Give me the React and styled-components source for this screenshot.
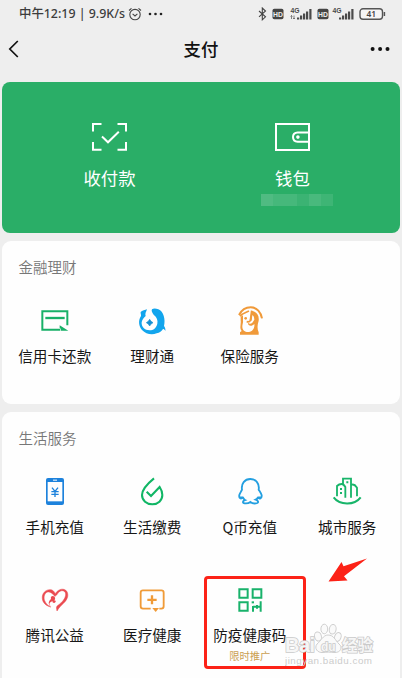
import React from 'react';
import styled, { createGlobalStyle } from 'styled-components';

const GlobalStyle = createGlobalStyle`
  * { box-sizing: border-box; }
  body {
    margin: 0;
    background: #eeeeee;
    font-family: 'Noto Sans CJK SC', 'Noto Sans', sans-serif;
    overflow: hidden;
  }
  svg { display: block; }
`

const Page = styled.div`
  position: relative;
  width: 402px;
  height: 678px;
  overflow: hidden;
  display: flex;
  flex-direction: column;
  background: #eeeeee;
`

const StatusBar = styled.div`
  height: 27px;
  padding: 0 16px 0 19px;
  display: flex;
  justify-content: space-between;
  align-items: center;
  color: #3c3c3c;
  flex: none;
`

const StatusText = styled.div`
  display: flex;
  align-items: center;
  font-family: 'Noto Sans', 'Noto Sans CJK SC', sans-serif;
  font-size: 12.4px;
  font-weight: 500;
  line-height: 18px;
  white-space: nowrap;
  svg { margin-left: 3px; }
`

const StatusIcons = styled.div`
  display: flex;
  align-items: center;
`

const NavBar = styled.div`
  height: 55px;
  padding: 0 12px 11px 8px;
  display: grid;
  grid-template-columns: 64px 1fr 60px;
  align-items: center;
  flex: none;
  > :last-child { justify-self: end; }
`

const Title = styled.h1`
  margin: 0;
  text-align: center;
  font-size: 17.4px;
  font-weight: 500;
  line-height: 24px;
  color: #111;
`

const Cards = styled.div`
  display: flex;
  flex-direction: column;
  gap: 8px;
  padding: 0 2px;
`

const PayCard = styled.div`
  height: 151px;
  border-radius: 8px;
  background: #2aae67;
  display: grid;
  grid-template-columns: 1fr 1fr;
  padding: 38px 16px 0;
  color: white;
`

const PayEntry = styled.div`
  display: flex;
  flex-direction: column;
  align-items: center;
`

const PayLabel = styled.div`
  margin-top: 13px;
  font-size: 17.4px;
  line-height: 26px;
`

const Mosaic = styled.div`
  display: grid;
  grid-template-columns: repeat(6, 12px);
  height: 12px;
  margin: 3px 0 0 9px;
`

const Block = styled.div`
  background: ${p => p.$color};
`

const Section = styled.div`
  height: ${p => p.$height}px;
  border-radius: 9px;
  background: #fefefe;
  padding: 15px 4px 0;
`

const SectionTitle = styled.div`
  padding-left: 12.5px;
  font-size: 14.5px;
  line-height: 22px;
  font-weight: 350;
  color: #777;
`

const Grid = styled.div`
  display: grid;
  grid-template-columns: repeat(4, 97.5px);
  grid-auto-rows: 107.5px;
  margin-top: 28px;
`

const Item = styled.div`
  position: relative;
  display: flex;
  flex-direction: column;
  align-items: center;
`

const Label = styled.div`
  margin-top: 9px;
  font-size: 14.6px;
  line-height: 22px;
  color: #171717;
  white-space: nowrap;
`

const Promo = styled.div`
  margin-top: 2px;
  font-size: 10.3px;
  line-height: 16px;
  color: #cba052;
`

const Highlight = styled.div`
  position: absolute;
  left: 3px;
  top: -9px;
  width: 102px;
  height: 93px;
  border: 3px solid #fc2217;
  border-radius: 4px;
`

const Arrow = styled.svg`
  position: absolute;
  left: 328px;
  top: 557px;
`

const Watermark = styled.div`
  position: absolute;
  left: 285px;
  top: 622px;
  width: 90px;
  height: 48px;
`

const WatermarkSvg = styled.svg`
  font-family: 'Liberation Sans', 'Noto Sans CJK SC', sans-serif;
`

const Signal = ({ data }) => (
  <svg width="23" height="14" viewBox="0 0 23 14" fill="#4a4a4a">
    <text x=".5" y="6" fontSize="6.8" fontWeight="700" fontFamily="Liberation Sans, sans-serif">4G</text>
    {data && <path d="M1.5 12V8.5M.5 9.5l1-1 1 1M4 8.5V12M3 11l1 1 1-1" stroke="#555" strokeWidth=".7" fill="none" />}
    <rect x="7" y="10.5" width="2.2" height="2" />
    <rect x="10" y="8.5" width="2.2" height="4" />
    <rect x="13" y="6.5" width="2.2" height="6" />
    <rect x="16" y="4.5" width="2.2" height="8" />
    <rect x="19.3" y="2" width="2.2" height="10.5" />
  </svg>
)

const Hd = () => (
  <svg width="12" height="12" viewBox="0 0 12 12">
    <rect x=".5" y=".8" width="11" height="10.4" rx="1.8" fill="#444" />
    <text x="6" y="8.6" fontSize="6.8" fontWeight="700" textAnchor="middle" fill="#eee" fontFamily="Liberation Sans, sans-serif">HD</text>
  </svg>
)

const Gap = styled.span`
  width: ${p => p.$w}px;
`

const Icon = ({ color, children }) => (
  <svg width="30" height="30" viewBox="0 0 90 90" fill="none" stroke={color} strokeWidth="6.2">
    {children}
  </svg>
)

const CreditIcon = () => (
  <Icon color="#18b068">
    <path d="M60 71.5H7V15.5H82V58" strokeWidth="6" />
    <path d="M16 36H74" strokeWidth="7" />
    <path d="M59 58L85 74H62V68L59 66Z" fill="#18b068" stroke="none" />
  </Icon>
)

const FundIcon = () => (
  <Icon color="none">
    <path d="M30 10C25 13 15 13 11 18C10 23 13 25 12 30C3 43 5 61 15 72C26 84 44 88 59 82C68 80 74 75 78 69C80 69 83 71 85 75C86 69 84 64 81 60C86 42 80 16 64 10C56 7 49 7 45 10C42 15 46 20 50 26C60 33 63 43 61 53C58 66 49 73 38 73C23 73 13 63 14 49C15 41 21 34 26 30C23 23 28 17 30 10Z" fill="#12a5ed" />
    <path d="M38 40Q41 47 48 50Q41 53 38 60Q35 53 28 50Q35 47 38 40Z" fill="#168fd2" stroke="#168fd2" strokeWidth="2" />
  </Icon>
)

const InsuranceIcon = () => (
  <Icon color="#f09a3a">
    <path d="M12 27C22 8 36 4 47 4C66 4 78 19 81 37" strokeWidth="6" />
    <path d="M15 31C22 21 32 20 42 15" strokeWidth="5" />
    <path d="M50 14C66 18 73 28 71 44C67 56 66 68 71 79V86H15V79L20 75C12 64 19 54 17 44V32L24 28V44C25 50 22 56 22 62C22 78 40 82 51 74C57 69 59 61 58 54C50 63 37 60 39 50C42 54 48 54 52 50L58 41C58 32 54 28 52 28L50 44L44 43Z" fill="#f09a3a" stroke="none" />
    <circle cx="32" cy="37" r="4" fill="#f09a3a" stroke="none" />
    <path d="M50 14L46 44Q43 49 35 47" strokeWidth="5" />
  </Icon>
)

const PhoneIcon = () => (
  <Icon color="#1d82dc">
    <rect x="18" y="3" width="54" height="81" rx="6" fill="#1d82dc" stroke="none" />
    <rect x="23" y="15" width="44" height="58" fill="#fefefe" stroke="none" />
    <path d="M39 9.5H51" stroke="#fff" strokeWidth="3" />
    <path d="M36 32L45 43L54 32M45 42V60M34 44H56M34 52H56" strokeWidth="4" />
  </Icon>
)

const BillIcon = () => (
  <Icon color="#10b665">
    <path d="M51 4C35 17 15 35 15 54C15 70 29 82 46 82C63 82 76 70 76 54C76 44 72 36 68 30L42 57L29 44" />
  </Icon>
)

const QqIcon = () => (
  <Icon color="#239fe0">
    <path d="M24 60C18 68 11 64 13 54C15 48 19 43 21 38C18 20 29 6 46 6C63 6 74 20 71 38C74 43 78 48 80 55C81 65 73 68 68 60M12 61H24M68 61H80M23 60C25 64 26 67 30 69C23 71 21 78 29 79C37 80 42 78 46 75C51 79 61 80 67 78C72 75 68 70 62 68C66 66 68 64 69 60" strokeWidth="5.5" />
  </Icon>
)

const CityIcon = () => (
  <Icon color="#18b56a">
    <path d="M5 61C23 85 67 86 86 61" />
    <path d="M15 58V27Q21 21 29 21Q35 21 40 30V62M33 22V5H57V62M57 24C67 18 73 29 75 32V58" strokeWidth="5.5" />
    <path d="M46 13V19M27 33V39M27 45V51" strokeWidth="6" />
  </Icon>
)

const HeartIcon = () => (
  <Icon color="none">
    <path d="M51 78C50 70 47 66 54 61C66 52 77 41 77 27C77 17 64 13 56 22C52 27 48 34 44 34C39 27 32 19 23 21C13 24 10 37 14 47C18 57 25 62 32 66C20 63 8 54 7 41C5 25 17 14 29 14C39 13 43 21 46 26C52 16 62 11 71 13C81 15 85 26 83 35C79 53 61 59 51 78Z" fill="#ea4a50" stroke="#ea4a50" strokeWidth="1.5" />
    <path d="M33 42C30 32 40 30 44 36C47 40 45 46 41 46C47 45 49 49 46 52C43 56 36 53 38 49C30 51 23 58 34 65C25 62 23 50 33 42Z" fill="#ea4a50" />
  </Icon>
)

const MedicalIcon = () => (
  <Icon color="#f09b38">
    <path d="M41 71H18Q11 71 11 64V23Q11 16 18 16H73Q80 16 80 23V64Q80 71 73 71H67" strokeWidth="5.5" />
    <path d="M46 69H66L56 81Z" fill="#f09b38" stroke="none" />
    <path d="M45 31V58M31 44.5H59" strokeWidth="7" />
  </Icon>
)

const QrIcon = () => (
  <Icon color="#19b26b">
    <path d="M13 13H38V38H13ZM53 13H79V38H53ZM13 52H38V77H13Z" strokeWidth="6" />
    <path d="M54 65H79M54 63V80M77 49V80M66 60V71" strokeWidth="6" />
    <path d="M50 52H57" strokeWidth="6" />
  </Icon>
)

const finance = [
  { name: '信用卡还款', icon: CreditIcon },
  { name: '理财通', icon: FundIcon },
  { name: '保险服务', icon: InsuranceIcon },
]

const life = [
  { name: '手机充值', icon: PhoneIcon },
  { name: '生活缴费', icon: BillIcon },
  { name: 'Q币充值', icon: QqIcon },
  { name: '城市服务', icon: CityIcon },
  { name: '腾讯公益', icon: HeartIcon },
  { name: '医疗健康', icon: MedicalIcon },
  { name: '防疫健康码', icon: QrIcon, promo: '限时推广' },
]

const mosaicColors = ['#50bb82', '#46b87b', '#46b87b', '#3bb373', '#49b97d', '#3eb575']

const Services = ({ title, items, height }) => (
  <Section $height={height}>
    <SectionTitle>{title}</SectionTitle>
    <Grid>
      {items.map(({ name, icon: Glyph, promo }) => (
        <Item key={name}>
          <Glyph />
          <Label>{name}</Label>
          {promo && <Promo>{promo}</Promo>}
          {promo && <Highlight />}
        </Item>
      ))}
    </Grid>
  </Section>
)

const App = () => (
  <Page>
    <GlobalStyle />
    <StatusBar>
      <StatusText>
        中午12:19 | 9.9K/s
        <svg width="14" height="14" viewBox="0 0 14 14" fill="none" stroke="#444" strokeWidth="1.1">
          <circle cx="7" cy="7.6" r="5.2" />
          <path d="M1 3.5L3.5 1.3M10.5 1.3L13 3.5M4.6 6.8L7 9L9.4 6.8" />
        </svg>
        <svg width="22" height="14" viewBox="0 0 22 14" fill="#222">
          <circle cx="5" cy="7" r="1.3" />
          <circle cx="10.5" cy="7" r="1.3" />
          <circle cx="16" cy="7" r="1.3" />
        </svg>
      </StatusText>
      <StatusIcons>
        <svg width="9" height="14" viewBox="0 0 9 14" fill="none" stroke="#444" strokeWidth="1.1">
          <path d="M1 4L7.5 9.8L4.3 12.8V1L7.5 4L1 9.8" />
        </svg>
        <Gap $w={5} />
        <Hd />
        <Gap $w={6} />
        <Signal data />
        <Gap $w={4} />
        <Hd />
        <Gap $w={3} />
        <Signal />
        <Gap $w={4} />
        <svg width="27" height="12" viewBox="0 0 27 12">
          <rect x="1" y=".8" width="22.5" height="10.4" rx="3" fill="#f5f5f5" stroke="#555" strokeWidth="1.4" />
          <path d="M25.4 4V8" stroke="#555" strokeWidth="1.5" />
          <text x="12.2" y="9" fontSize="8.3" fontWeight="600" textAnchor="middle" fill="#444" fontFamily="Noto Sans, sans-serif">41</text>
        </svg>
      </StatusIcons>
    </StatusBar>
    <NavBar>
      <svg width="12" height="18" viewBox="0 0 12 18" fill="none" stroke="#111" strokeWidth="1.7">
        <path d="M9.8 1L1.8 9L9.8 17" />
      </svg>
      <Title>支付</Title>
      <svg width="20" height="6" viewBox="0 0 20 6" fill="#111">
        <circle cx="2.6" cy="3" r="2" />
        <circle cx="10.1" cy="3" r="2" />
        <circle cx="17.5" cy="3" r="2" />
      </svg>
    </NavBar>
    <Cards>
      <PayCard>
        <PayEntry>
          <svg width="36" height="32" viewBox="0 0 36 32" fill="none" stroke="#fff" strokeWidth="2">
            <path d="M1 11.5V4H9.5M25.5 4H34V11.5M34 22V29.7H25.5M9.5 29.7H1V22M10 16.5L16 22.3L26.8 11.8" />
          </svg>
          <PayLabel>收付款</PayLabel>
        </PayEntry>
        <PayEntry>
          <svg width="36" height="32" viewBox="0 0 36 32" fill="none" stroke="#fff" strokeWidth="2">
            <rect x="1" y="4" width="33" height="26" />
            <path d="M33.5 12.4H22.7Q18 12.7 18 17Q18 21.5 22.7 21.7H33.5" />
            <circle cx="22.9" cy="17.1" r="1.8" fill="#fff" stroke="none" />
          </svg>
          <PayLabel>钱包</PayLabel>
          <Mosaic>
            {mosaicColors.map((c, i) => <Block key={i} $color={c} />)}
          </Mosaic>
        </PayEntry>
      </PayCard>
      <Services title="金融理财" items={finance} height={163} />
      <Services title="生活服务" items={life} height={290} />
    </Cards>
    <Arrow width="42" height="28" viewBox="0 0 42 28">
      <path d="M39 1.5L15.5 9.2L13.5 5L.5 24.5L19.5 23.5L16 19.2Z" fill="#fc2217" />
    </Arrow>
    <Watermark>
      <WatermarkSvg width="90" height="48" viewBox="0 0 90 48">
        <g fill="#fafafa" stroke="#cfcfcf" strokeWidth="1">
          <ellipse cx="33" cy="14.5" rx="3.4" ry="4.6" transform="rotate(-15 33 14.5)" />
          <ellipse cx="39.3" cy="7" rx="3.4" ry="4.8" />
          <ellipse cx="47.7" cy="7.3" rx="3.4" ry="4.8" transform="rotate(10 47.7 7.3)" />
          <ellipse cx="52.8" cy="15" rx="3.2" ry="4.6" transform="rotate(20 52.8 15)" />
          <path d="M43 13C38 13 36 19 32 22C29 26 32 31 38 30.5C42 30 45 30 49 30.5C56 31 58 25 54 22C50 18 49 13 43 13Z" />
        </g>
        <g fill="#f6f6f6" stroke="#c9c9c9" strokeWidth="1.5" paintOrder="stroke" fontWeight="700">
          <text x="0" y="30" fontSize="20" textLength="30">Bai</text>
          <text x="36" y="28.5" fontSize="12">du</text>
          <text x="57" y="29" fontSize="15.5">经验</text>
        </g>
        <text x="0" y="42" fontSize="9.8" fill="#cccccc" textLength="87">jingyan.baidu.com</text>
      </WatermarkSvg>
    </Watermark>
  </Page>
)

export default App;
